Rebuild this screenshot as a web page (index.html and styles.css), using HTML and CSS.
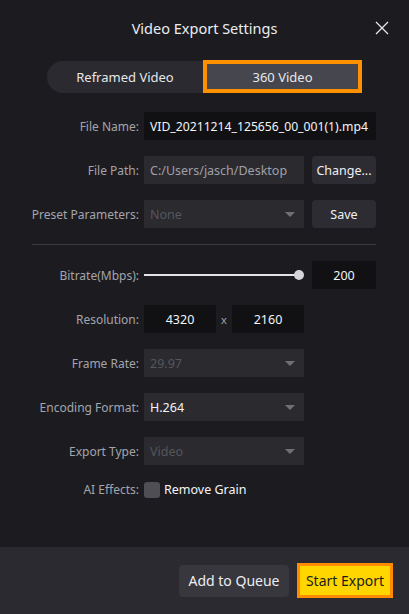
FILE: index.html
```html
<!DOCTYPE html>
<html lang="en">
<head>
<meta charset="utf-8">
<title>Video Export Settings</title>
<link rel="stylesheet" href="styles.css">
</head>
<body>
<div class="dialog">
  <header class="head">
    <span></span>
    <h1 class="title">Video Export Settings</h1>
    <span class="close-wrap">
      <svg class="close" width="14" height="14" viewBox="0 0 14 14"><path d="M1 1 L13 13 M13 1 L1 13" stroke="#e6e6e6" stroke-width="1.3" fill="none"/></svg>
    </span>
  </header>

  <div class="tabs">
    <div class="seg">
      <span class="tab">Reframed Video</span>
      <span class="tab active">360 Video</span>
    </div>
  </div>

  <div class="form">
    <div class="row">
      <span class="label">File Name:</span>
      <div class="ctrl"><span class="field dark wide value fname">VID_20211214_125656_00_001(1).mp4</span></div>
    </div>
    <div class="row">
      <span class="label">File Path:</span>
      <div class="ctrl">
        <span class="field grey mid muted">C:/Users/jasch/Desktop</span>
        <span class="btn">Change...</span>
      </div>
    </div>
    <div class="row">
      <span class="label">Preset Parameters:</span>
      <div class="ctrl">
        <span class="field grey mid disabled combo">None<i class="arrow"></i></span>
        <span class="btn">Save</span>
      </div>
    </div>

    <div class="divider"></div>

    <div class="row">
      <span class="label">Bitrate(Mbps):</span>
      <div class="ctrl">
        <div class="slider"><div class="track"></div><div class="thumb"></div></div>
        <span class="field dark small center value">200</span>
      </div>
    </div>
    <div class="row">
      <span class="label">Resolution:</span>
      <div class="ctrl res">
        <span class="field dark half center value">4320</span>
        <span class="times">x</span>
        <span class="field dark half center value">2160</span>
      </div>
    </div>
    <div class="row">
      <span class="label">Frame Rate:</span>
      <div class="ctrl"><span class="field grey mid disabled combo">29.97<i class="arrow"></i></span></div>
    </div>
    <div class="row">
      <span class="label">Encoding Format:</span>
      <div class="ctrl"><span class="field grey mid value combo">H.264<i class="arrow"></i></span></div>
    </div>
    <div class="row">
      <span class="label">Export Type:</span>
      <div class="ctrl"><span class="field grey mid disabled combo">Video<i class="arrow"></i></span></div>
    </div>
    <div class="row short">
      <span class="label">AI Effects:</span>
      <div class="ctrl check"><span class="box"></span><span class="value">Remove Grain</span></div>
    </div>
  </div>

  <footer class="foot">
    <span class="fbtn queue">Add to Queue</span>
    <span class="fbtn export">Start Export</span>
  </footer>
</div>
</body>
</html>
```
FILE: styles.css
```css
* { box-sizing: border-box; }
html, body { margin: 0; padding: 0; }
body {
  background: #1c1c20;
  font-family: "Noto Sans", "Open Sans", sans-serif;
  color: #e8e8ec;
}
.dialog {
  width: 409px;
  height: 614px;
  display: flex;
  flex-direction: column;
  background: #1c1c20;
}
.head {
  display: grid;
  grid-template-columns: 1fr auto 1fr;
  align-items: center;
  padding-top: 17px;
  height: 39px;
}
.title {
  margin: 0;
  font-size: 14.5px;
  font-weight: 400;
  line-height: 22px;
  color: #ececf0;
}
.close-wrap {
  justify-self: end;
  padding-right: 20px;
  display: flex;
}
.tabs {
  display: flex;
  justify-content: center;
  margin-top: 22px;
}
.seg {
  display: flex;
  width: 315px;
  height: 32px;
  background: #2a2a30;
  border-radius: 16px;
}
.tab {
  flex: 1;
  display: flex;
  align-items: center;
  justify-content: center;
  font-size: 13px;
  color: #e6e6ea;
}
.tab.active {
  flex: 0 0 159px;
  margin-top: -1px;
  height: 33px;
  border: 4px solid #ff9100;
  background: #46464e;
}
.form {
  margin-top: 19px;
  display: flex;
  flex-direction: column;
  gap: 16px;
}
.row {
  display: grid;
  grid-template-columns: 139px auto;
  column-gap: 5px;
  height: 28px;
  align-items: center;
}
.row.short { height: 17px; }
.label {
  text-align: right;
  font-size: 12px;
  color: #a4a4ac;
  white-space: nowrap;
}
.ctrl {
  display: flex;
  gap: 8px;
  align-items: center;
  height: 100%;
}
.field {
  height: 28px;
  display: flex;
  align-items: center;
  padding: 0 6px;
  font-size: 12.5px;
  white-space: nowrap;
  position: relative;
}
.fname { font-size: 12.2px; }
.dark { background: #111114; }
.grey { background: #2a2a2f; }
.wide { width: 232px; }
.mid { width: 160px; }
.small { width: 64px; }
.half { width: 72px; }
.center { justify-content: center; }
.value { color: #f4f4f8; }
.muted { color: #a0a0a8; }
.disabled { color: #56565c; }
.combo { padding-right: 0; }
.arrow {
  position: absolute;
  right: 9px;
  top: 12px;
  width: 0;
  height: 0;
  border-left: 5px solid transparent;
  border-right: 5px solid transparent;
  border-top: 5px solid #707076;
}
.btn {
  width: 64px;
  height: 28px;
  display: flex;
  align-items: center;
  justify-content: center;
  background: #2c2c32;
  border-radius: 4px;
  font-size: 12.5px;
  color: #f0f0f4;
}
.divider {
  height: 1px;
  background: #3a3a40;
  margin: 0 33px 0 32px;
}
.slider {
  width: 160px;
  height: 28px;
  display: flex;
  align-items: center;
}
.track {
  width: 155px;
  height: 2px;
  background: #e4e4e8;
}
.thumb {
  width: 10px;
  height: 10px;
  border-radius: 50%;
  background: #d6d6da;
  margin-left: -5px;
}
.res { gap: 0; }
.times {
  width: 16px;
  text-align: center;
  font-size: 11px;
  color: #a0a0a8;
}
.check { gap: 4px; }
.box {
  width: 16px;
  height: 16px;
  border-radius: 3px;
  background: #4e4e54;
}
.check .value { font-size: 12.5px; }
.foot {
  margin-top: auto;
  height: 67px;
  background: #2a2a30;
  display: flex;
  justify-content: flex-end;
  align-items: center;
  gap: 8px;
  padding-right: 16px;
}
.fbtn {
  display: flex;
  align-items: center;
  justify-content: center;
  font-size: 14px;
}
.queue {
  width: 110px;
  height: 32px;
  background: #37373d;
  border-radius: 4px;
  color: #ededf0;
}
.export {
  width: 96px;
  height: 35px;
  background: #ffd600;
  border: 3px solid #ff8c00;
  color: #1c1c1c;
}
```
